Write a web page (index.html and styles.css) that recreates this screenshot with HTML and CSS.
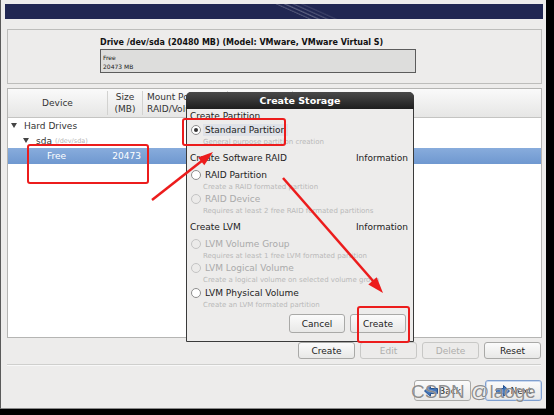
FILE: index.html
```html
<!DOCTYPE html>
<html lang="en">
<head>
    <meta charset="UTF-8">
    <title>Create Storage</title>
    <link rel="stylesheet" href="styles.css">
</head>
<body>
    <div class="screen">
        <div class="banner"></div>

        <div class="drive-panel">
            <div class="drive-title">Drive /dev/sda (20480 MB) (Model: VMware, VMware Virtual S)</div>
            <div class="drive-bar">
                <span>Free</span>
                <span>20473 MB</span>
            </div>
        </div>

        <div class="tree-panel">
            <div class="tree-head">
                <div class="col col-device">Device</div>
                <div class="col col-size">Size<br>(MB)</div>
                <div class="col col-mount">Mount Point/<br>RAID/Volume</div>
                <div class="col col-type">Type</div>
            </div>
            <div class="tree-row">
                <span class="expander"></span>Hard Drives
            </div>
            <div class="tree-row level-1">
                <span class="expander"></span>sda <span class="path">(/dev/sda)</span>
            </div>
            <div class="tree-row level-2 selected">
                <span class="name">Free</span>
                <span class="size">20473</span>
            </div>
        </div>

        <div class="actions">
            <button class="btn">Create</button>
            <button class="btn" disabled>Edit</button>
            <button class="btn" disabled>Delete</button>
            <button class="btn">Reset</button>
        </div>

        <div class="sep"></div>

        <div class="nav">
            <button class="btn nav-btn">
                <svg width="14" height="12" viewBox="0 0 14 12"><path d="M0.5 6 L6.5 0.5 L6.5 3.5 L13.5 3.5 L13.5 8.5 L6.5 8.5 L6.5 11.5 Z" fill="#3d72b8" stroke="#24508c" stroke-width="1"/></svg>
                Back
            </button>
            <button class="btn nav-btn focus">
                <svg width="14" height="12" viewBox="0 0 14 12"><path d="M13.5 6 L7.5 0.5 L7.5 3.5 L0.5 3.5 L0.5 8.5 L7.5 8.5 L7.5 11.5 Z" fill="#3d72b8" stroke="#24508c" stroke-width="1"/></svg>
                Next
            </button>
        </div>
    </div>

    <div class="dialog">
        <div class="dialog-title">Create Storage</div>
        <div class="dialog-body">
            <div class="section first">Create Partition</div>
            <div class="option">
                <span class="radio checked"></span><span class="label focused">Standard Partition</span>
            </div>
            <div class="desc">General purpose partition creation</div>

            <div class="section"><span>Create Software RAID</span><span>Information</span></div>
            <div class="option">
                <span class="radio"></span><span class="label">RAID Partition</span>
            </div>
            <div class="desc">Create a RAID formated partition</div>
            <div class="option disabled">
                <span class="radio"></span><span class="label">RAID Device</span>
            </div>
            <div class="desc">Requires at least 2 free RAID formated partitions</div>

            <div class="section"><span>Create LVM</span><span>Information</span></div>
            <div class="option disabled">
                <span class="radio"></span><span class="label">LVM Volume Group</span>
            </div>
            <div class="desc">Requires at least 1 free LVM formated partition</div>
            <div class="option disabled">
                <span class="radio"></span><span class="label">LVM Logical Volume</span>
            </div>
            <div class="desc">Create a logical volume on selected volume group</div>
            <div class="option">
                <span class="radio"></span><span class="label">LVM Physical Volume</span>
            </div>
            <div class="desc">Create an LVM formated partition</div>

            <div class="dialog-buttons">
                <button class="btn">Cancel</button>
                <button class="btn">Create</button>
            </div>
        </div>
    </div>

    <!-- red annotations drawn over the screenshot -->
    <div class="mark mark-free"></div>
    <div class="mark mark-standard"></div>
    <div class="mark mark-create"></div>
    <svg class="arrows" width="554" height="415" viewBox="0 0 554 415">
        <line x1="152" y1="200" x2="203" y2="160" stroke="#ec1c1c" stroke-width="2.5"/>
        <polygon points="213,152 204.3,165.2 198.1,157.4" fill="#ec1c1c"/>
        <line x1="283" y1="178" x2="374" y2="282" stroke="#ec1c1c" stroke-width="2.5"/>
        <polygon points="383,293 376.7,277.3 368.3,284.5" fill="#ec1c1c"/>
    </svg>

    <div class="watermark">CSDN @laoge</div>
</body>
</html>
```

FILE: styles.css
```css
body {
    margin: 0;
    width: 554px;
    height: 415px;
    background: #000;
    position: relative;
    overflow: hidden;
    font-family: 'DejaVu Sans', sans-serif;
    font-size: 9px;
    color: #222;
}
.screen {
    width: 541px;
    height: 404px;
    padding: 4px 4px 0 0;
    background: #edeceb;
    border-left: 1px solid #5a5a5a;
    border-bottom: 1px solid #8a8a8a;
}
.banner {
    height: 15px;
    margin: 0 -1px 0 4px;
    background:
        linear-gradient(24deg, transparent 53%, rgba(255, 255, 255, 0.22) 53.3%, transparent 53.9%,
            transparent 54.4%, rgba(255, 255, 255, 0.28) 54.8%, transparent 55.4%,
            transparent 55.9%, rgba(255, 255, 255, 0.2) 56.3%, transparent 56.9%,
            transparent 57.4%, rgba(255, 255, 255, 0.12) 57.8%, transparent 58.4%),
        #212752;
}
.drive-panel {
    height: 46px;
    margin: 10px 0 0 6px;
    padding: 7px 0 0 92px;
    border: 1px solid #bdbdbb;
}
.drive-title {
    font-weight: bold;
    font-size: 8px;
    line-height: 11px;
    color: #111;
}
.drive-bar {
    width: 312px;
    height: 19px;
    margin-top: 1px;
    padding: 3px 0 0 2px;
    border: 1px solid #5c5c5c;
    background: #dddddc;
    font-size: 6px;
    line-height: 9px;
}
.drive-bar span {
    display: block;
}
.tree-panel {
    height: 248px;
    margin: 4px 0 0 6px;
    border: 1px solid #b5b5b3;
    background: #fff;
}
.tree-head {
    display: flex;
    height: 28px;
    border-bottom: 1px solid #c4c4c2;
    background: linear-gradient(#fafafa, #e6e6e5);
    line-height: 12px;
    color: #333;
}
.col {
    display: flex;
    align-items: center;
    border-right: 1px solid #d2d2d0;
    margin: 2px 0;
}
.col-device {
    width: 99px;
    justify-content: center;
}
.col-size {
    width: 34px;
    justify-content: center;
    text-align: center;
}
.col-mount {
    width: 80px;
    padding-left: 4px;
}
.col-type {
    width: 60px;
    padding-left: 4px;
}
.tree-row {
    display: flex;
    align-items: center;
    height: 15px;
    padding-left: 3px;
    color: #333;
}
.expander {
    width: 0;
    height: 0;
    margin-right: 7px;
    border-left: 3.5px solid transparent;
    border-right: 3.5px solid transparent;
    border-top: 5px solid #444;
}
.level-1 {
    padding-left: 15px;
}
.path {
    margin-left: 3px;
    font-size: 6.5px;
    color: #b5b5b5;
}
.selected {
    height: 16px;
    padding-left: 0;
    background: linear-gradient(#88acdc, #6f98d0);
    color: #fff;
}
.selected .name {
    width: 64px;
    padding-left: 39px;
}
.selected .size {
    width: 30px;
    text-align: right;
}
.actions {
    display: flex;
    justify-content: flex-end;
    gap: 5px;
    margin: 4px 1px 0 0;
}
.btn {
    width: 57px;
    height: 17px;
    padding: 0;
    border: 1px solid #a9a9a7;
    border-radius: 3px;
    background: linear-gradient(#fbfbfb, #e8e8e7);
    font-family: 'DejaVu Sans', sans-serif;
    font-size: 9px;
    color: #222;
}
.btn:disabled {
    color: #aeaeac;
    border-color: #c8c8c6;
    background: #ecebea;
}
.sep {
    height: 1px;
    margin: 5px 1px 0 6px;
    background: #cfcfcd;
    border-bottom: 1px solid #f8f8f8;
}
.nav {
    display: flex;
    justify-content: flex-end;
    gap: 14px;
    margin-top: 14px;
}
.nav-btn {
    height: 21px;
    display: flex;
    align-items: center;
    justify-content: center;
    gap: 1px;
}
.nav-btn.focus {
    border-color: #7f9fcf;
    box-shadow: inset 0 0 0 1px #c9d8ee;
}
.dialog {
    position: absolute;
    left: 186px;
    top: 92px;
    width: 226px;
    height: 248px;
    border: 1px solid #3a3a3a;
    border-radius: 5px 5px 0 0;
    background: #edeceb;
}
.dialog-title {
    height: 17px;
    margin: -1px -1px 0;
    border-radius: 5px 5px 0 0;
    background: linear-gradient(#4a4a4a, #1e1e1e);
    color: #fff;
    font-weight: bold;
    font-size: 9.5px;
    line-height: 17px;
    text-align: center;
}
.dialog-body {
    padding: 0 5px 0 3px;
}
.section {
    display: flex;
    justify-content: space-between;
    line-height: 14px;
    margin-top: 2px;
    color: #222;
}
.section.first {
    margin-top: 0;
}
.option {
    display: flex;
    align-items: center;
    height: 12px;
    margin-top: 4px;
    color: #222;
}
.section.first + .option {
    margin-top: 1px;
}
.desc + .option {
    margin-top: 0;
}
.option.disabled {
    color: #aaa;
}
.radio {
    width: 8px;
    height: 8px;
    margin: 0 4px 0 1px;
    border: 1px solid #8e8e8e;
    border-radius: 50%;
    background: #fff;
    position: relative;
}
.option.disabled .radio {
    border-color: #c4c4c4;
    background: #ecebea;
}
.radio.checked::after {
    content: '';
    position: absolute;
    left: 2px;
    top: 2px;
    width: 4px;
    height: 4px;
    border-radius: 50%;
    background: #333;
}
.label.focused {
    padding: 1px 2px;
    margin-left: -2px;
    background: #dfe2e8;
}
.desc {
    padding-left: 13px;
    font-size: 7px;
    line-height: 12.5px;
    color: #b9b9b9;
}
.dialog-buttons {
    display: flex;
    justify-content: flex-end;
    gap: 5px;
    margin-top: 3px;
    padding-right: 2px;
}
.dialog-buttons .btn {
    width: 56px;
    height: 19px;
}
.mark {
    position: absolute;
    border: 2px solid #ec1c1c;
    border-radius: 3px;
}
.mark-free {
    left: 27px;
    top: 144px;
    width: 118px;
    height: 36px;
}
.mark-standard {
    left: 182px;
    top: 118px;
    width: 100px;
    height: 24px;
}
.mark-create {
    left: 357px;
    top: 306px;
    width: 49px;
    height: 33px;
}
.arrows {
    position: absolute;
    left: 0;
    top: 0;
}
.watermark {
    position: absolute;
    left: 411px;
    top: 381px;
    font-family: 'Liberation Sans', sans-serif;
    font-size: 19px;
    color: rgba(105, 105, 105, 0.75);
    text-shadow: 0 0 1px #fff;
}
```
